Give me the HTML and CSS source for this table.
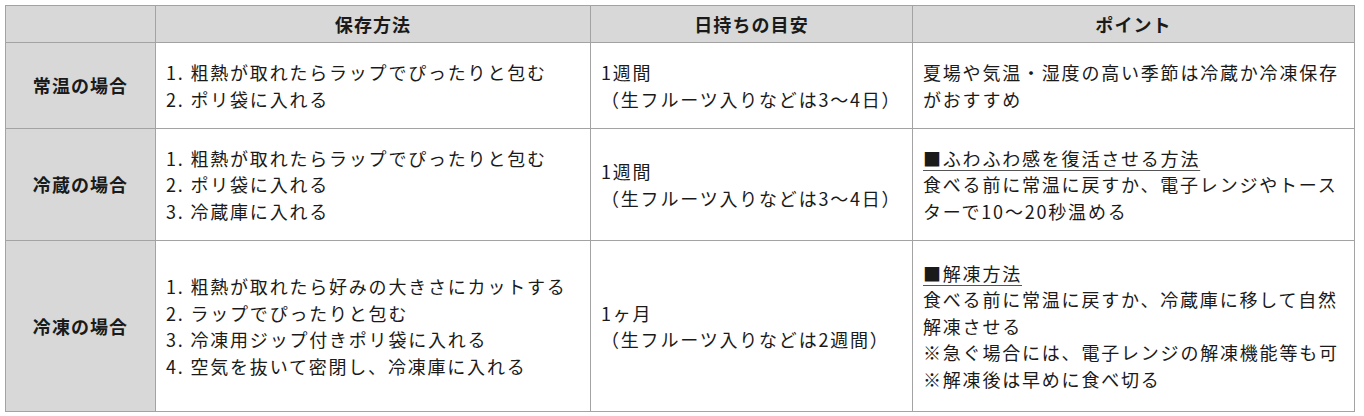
FILE: index.html
```html
<!DOCTYPE html>
<html lang="ja">
<head>
<meta charset="utf-8">
<title>保存方法</title>
<link rel="stylesheet" href="styles.css">
</head>
<body>
<div class="wrap">
<table class="storage">
  <colgroup>
    <col class="c-label">
    <col class="c-method">
    <col class="c-days">
    <col class="c-point">
  </colgroup>
  <thead>
    <tr>
      <th class="corner"></th>
      <th>保存方法</th>
      <th>日持ちの目安</th>
      <th>ポイント</th>
    </tr>
  </thead>
  <tbody>
    <tr class="r1">
      <th class="label">常温の場合</th>
      <td>1. 粗熱が取れたらラップでぴったりと包む<br>2. ポリ袋に入れる</td>
      <td>1週間<br>（生フルーツ入りなどは3〜4日）</td>
      <td>夏場や気温・湿度の高い季節は冷蔵か冷凍保存がおすすめ</td>
    </tr>
    <tr class="r2">
      <th class="label">冷蔵の場合</th>
      <td>1. 粗熱が取れたらラップでぴったりと包む<br>2. ポリ袋に入れる<br>3. 冷蔵庫に入れる</td>
      <td>1週間<br>（生フルーツ入りなどは3〜4日）</td>
      <td><span class="sub">■ふわふわ感を復活させる方法</span><br>食べる前に常温に戻すか、電子レンジやトースターで10〜20秒温める</td>
    </tr>
    <tr class="r3">
      <th class="label">冷凍の場合</th>
      <td>1. 粗熱が取れたら好みの大きさにカットする<br>2. ラップでぴったりと包む<br>3. 冷凍用ジップ付きポリ袋に入れる<br>4. 空気を抜いて密閉し、冷凍庫に入れる</td>
      <td>1ヶ月<br>（生フルーツ入りなどは2週間）</td>
      <td><span class="sub">■解凍方法</span><br>食べる前に常温に戻すか、冷蔵庫に移して自然解凍させる<br>※急ぐ場合には、電子レンジの解凍機能等も可<br>※解凍後は早めに食べ切る</td>
    </tr>
  </tbody>
</table>
</div>
</body>
</html>
```

FILE: styles.css
```css
html, body {
  margin: 0;
  padding: 0;
  background: #ffffff;
}

.wrap {
  padding: 5px;
}

.storage {
  width: 1349px;
  table-layout: fixed;
  border-collapse: collapse;
  font-family: "Noto Sans CJK JP", "Noto Sans", sans-serif;
  font-size: 18px;
  letter-spacing: 0.1em;
  line-height: 26.5px;
  color: #1a1a1a;
}

.c-label { width: 150px; }
.c-method { width: 435px; }
.c-days { width: 322px; }
.c-point { width: 442px; }

.storage th,
.storage td {
  border: 1px solid #a3a3a3;
  padding: 0 10px;
  vertical-align: middle;
  text-align: left;
  font-weight: 400;
}

.storage thead th {
  background: #d8d8d8;
  text-align: center;
  font-weight: 700;
  height: 36px;
  padding: 0 10px;
  letter-spacing: 0.06em;
}

.storage th.label {
  background: #d8d8d8;
  text-align: center;
  font-weight: 700;
  letter-spacing: 0.06em;
}

.r1 > * { height: 85px; }
.r2 > * { height: 111px; }
.r3 > * { height: 170px; }

.sub {
  text-decoration: underline;
  text-decoration-color: #555;
  text-underline-offset: 4px;
}
```
